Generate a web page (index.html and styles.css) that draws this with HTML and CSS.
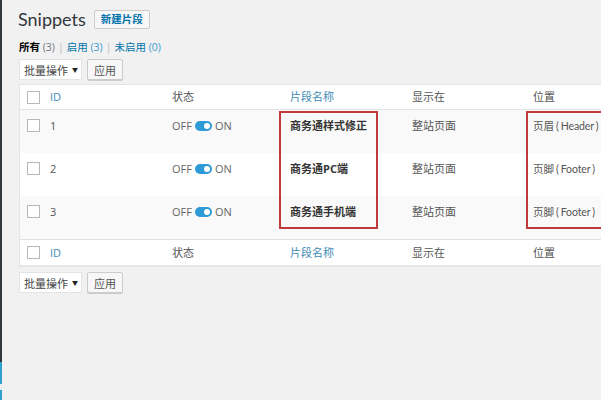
FILE: index.html
```html
<!DOCTYPE html>
<html lang="zh-CN">
<head>
<meta charset="utf-8">
<title>Snippets</title>
<link rel="stylesheet" href="styles.css">
</head>
<body>
<div class="layout">
  <div class="sidebar">
    <div class="seg dark"></div>
    <div class="seg blue1"></div>
    <div class="seg gap"></div>
    <div class="seg blue2"></div>
  </div>
  <main class="wrap">
    <div class="title-row">
      <h1 class="title">Snippets</h1>
      <a class="add-new">新建片段</a>
    </div>
    <ul class="subsubsub">
      <li><b class="current">所有</b> <span class="count">(3)</span></li>
      <li class="sep">|</li>
      <li><a>启用 <span class="count">(3)</span></a></li>
      <li class="sep">|</li>
      <li><a>未启用 <span class="count">(0)</span></a></li>
    </ul>
    <div class="bulk">
      <div class="select">批量操作 <span class="arrow">▼</span></div>
      <div class="btn">应用</div>
    </div>
    <div class="table">
      <div class="row head">
        <div class="cell cb"><span class="box"></span></div>
        <div class="cell link">ID</div>
        <div class="cell">状态</div>
        <div class="cell link">片段名称</div>
        <div class="cell">显示在</div>
        <div class="cell">位置</div>
      </div>
      <div class="row body alt">
        <div class="cell cb"><span class="box"></span></div>
        <div class="cell">1</div>
        <div class="cell"><span class="toggle"><span class="off">OFF</span><span class="switch"><span class="knob"></span></span><span class="on">ON</span></span></div>
        <div class="cell name">商务通样式修正</div>
        <div class="cell">整站页面</div>
        <div class="cell pos">页眉 ( Header )</div>
      </div>
      <div class="row body">
        <div class="cell cb"><span class="box"></span></div>
        <div class="cell">2</div>
        <div class="cell"><span class="toggle"><span class="off">OFF</span><span class="switch"><span class="knob"></span></span><span class="on">ON</span></span></div>
        <div class="cell name">商务通PC端</div>
        <div class="cell">整站页面</div>
        <div class="cell pos">页脚 ( Footer )</div>
      </div>
      <div class="row body alt">
        <div class="cell cb"><span class="box"></span></div>
        <div class="cell">3</div>
        <div class="cell"><span class="toggle"><span class="off">OFF</span><span class="switch"><span class="knob"></span></span><span class="on">ON</span></span></div>
        <div class="cell name">商务通手机端</div>
        <div class="cell">整站页面</div>
        <div class="cell pos">页脚 ( Footer )</div>
      </div>
      <div class="row head foot">
        <div class="cell cb"><span class="box"></span></div>
        <div class="cell link">ID</div>
        <div class="cell">状态</div>
        <div class="cell link">片段名称</div>
        <div class="cell">显示在</div>
        <div class="cell">位置</div>
      </div>
      <div class="mark mark-name"></div>
      <div class="mark mark-pos"></div>
    </div>
    <div class="bulk bottom">
      <div class="select">批量操作 <span class="arrow">▼</span></div>
      <div class="btn">应用</div>
    </div>
  </main>
</div>
</body>
</html>
```

FILE: styles.css
```css
* { box-sizing: border-box; }
html, body { margin: 0; padding: 0; }
body {
  background: #f1f1f1;
  font-family: "Open Sans", "Noto Sans CJK SC", sans-serif;
  font-size: 11px;
  color: #555;
  width: 601px;
  height: 400px;
  overflow: hidden;
}
.layout { display: flex; height: 400px; }
.sidebar { width: 2px; display: flex; flex-direction: column; flex-shrink: 0; }
.seg.dark { height: 362px; background: #32373c; }
.seg.blue1 { height: 22px; background: #2ea2cc; }
.seg.gap { height: 6px; background: #e9eef2; }
.seg.blue2 { flex: 1; background: #2ea2cc; }

.wrap { padding-left: 17px; flex: 1; min-width: 0; }

.title-row { display: flex; align-items: center; padding-top: 6px; height: 31px; }
.title {
  margin: 0 0 0 -1px;
  font-family: "Lato", "Open Sans", sans-serif;
  font-size: 18px;
  font-weight: 400;
  color: #32373c;
  line-height: 26px;
}
.add-new {
  margin-left: 8px;
  margin-top: 1px;
  height: 19px;
  line-height: 17px;
  padding: 0 6px;
  border: 1px solid #ccc;
  background: #f7f7f7;
  border-radius: 2px;
  color: #0073aa;
  font-weight: 600;
  font-size: 10.5px;
}

.subsubsub {
  list-style: none;
  margin: 0;
  padding: 0;
  margin-top: 9px;
  display: flex;
  gap: 3px;
  line-height: 14px;
  font-size: 10.5px;
}
.subsubsub a { color: #0073aa; }
.subsubsub .count { color: #72777c; }
.subsubsub a .count { color: #3a9bd0; }
.subsubsub .current { color: #000; font-weight: 600; }
.sep { color: #bbb; }

.bulk { display: flex; gap: 5px; margin-top: 5px; height: 21px; }
.bulk.bottom { margin-top: 6px; }
.select {
  width: 63px;
  height: 21px;
  background: #fff;
  border: 1px solid #e4e4e4;
  display: flex;
  align-items: center;
  padding-left: 4px;
  color: #444;
  font-size: 11px;
}
.arrow { font-size: 6px; margin-left: 4px; color: #222; }
.btn {
  width: 36px;
  height: 21px;
  background: #f7f7f7;
  border: 1px solid #ccc;
  border-radius: 2px;
  display: flex;
  align-items: center;
  justify-content: center;
  color: #555;
  box-shadow: 0 1px 0 #ccc;
}

.table {
  position: relative;
  margin-top: 4px;
  width: 640px;
  background: #fff;
  border: 1px solid #e5e5e5;
  box-shadow: 0 1px 1px rgba(0,0,0,.04);
}
.row {
  display: grid;
  grid-template-columns: 30px 122px 118px 122px 121px 1fr;
}
.row.head { height: 25px; align-items: center; border-bottom: 1px solid #e1e1e1; }
.row.foot { border-bottom: 0; border-top: 1px solid #e1e1e1; height: 26px; }
.row.body { height: 43px; padding-top: 8px; }
.row.alt { background: #f9f9f9; }
.cell { line-height: 16px; color: #555; white-space: nowrap; }
.cell.link { color: #3e8bb5; }
.cell.cb { padding-left: 7px; }
.row.body .cell.cb { padding-top: 1px; }
.cell.pos {
  font-family: "Lato", "Noto Sans CJK SC", sans-serif;
  font-size: 10.5px;
  letter-spacing: -0.1px;
  word-spacing: -0.5px;
}
.box {
  display: block;
  width: 13px;
  height: 13px;
  border: 1px solid #b4b9be;
  background: #fff;
}
.cell.name { font-weight: 700; color: #333; }

.toggle { display: inline-flex; align-items: center; gap: 3px; color: #666; }
.switch {
  width: 17px;
  height: 10px;
  border-radius: 5px;
  background: #2e9ad6;
  position: relative;
  display: inline-block;
}
.knob {
  position: absolute;
  right: 2px;
  top: 2px;
  width: 6px;
  height: 6px;
  border-radius: 50%;
  background: #fff;
}

.mark {
  position: absolute;
  border: 2px solid #c0393b;
  top: 26px;
  height: 118px;
}
.mark-name { left: 259px; width: 99px; }
.mark-pos { left: 506px; width: 120px; }
```
